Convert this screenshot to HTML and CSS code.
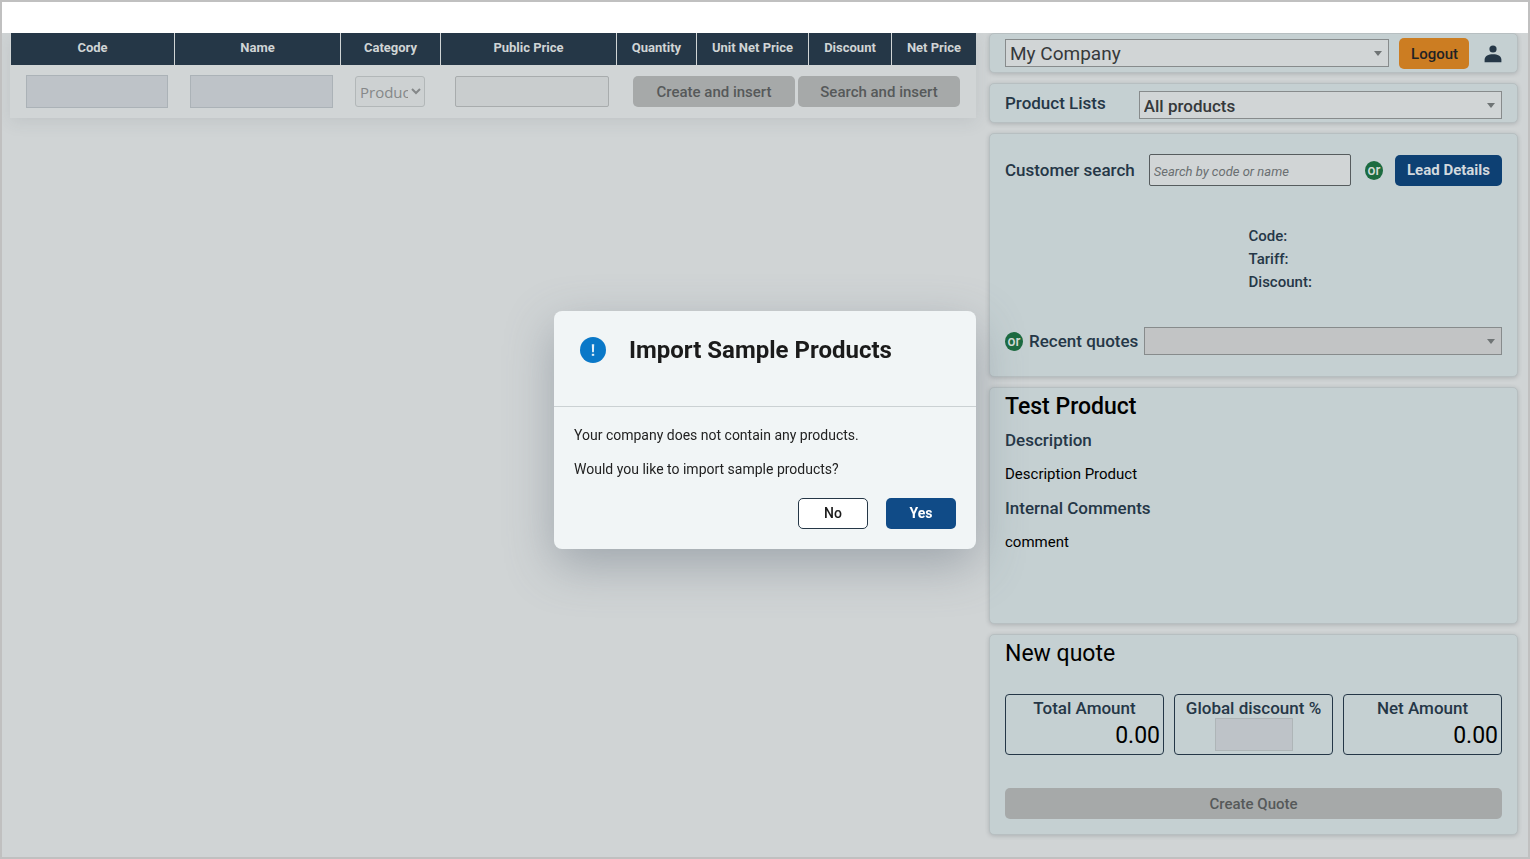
FILE: index.html
```html
<!DOCTYPE html>
<html lang="en">
<head>
<meta charset="utf-8">
<title>New quote</title>
<link rel="stylesheet" href="styles.css">
</head>
<body>
<div class="frame">
  <div class="topbar"></div>
  <div class="workspace">
    <main class="lines">
      <table class="lines-table">
        <colgroup>
          <col class="col-code"><col class="col-name"><col class="col-category"><col class="col-price">
          <col class="col-quantity"><col class="col-unit"><col class="col-discount"><col class="col-net">
        </colgroup>
        <thead>
          <tr><th>Code</th><th>Name</th><th>Category</th><th>Public Price</th><th>Quantity</th><th>Unit Net Price</th><th>Discount</th><th>Net Price</th></tr>
        </thead>
        <tbody>
          <tr>
            <td><input class="cell-input shaded" type="text" aria-label="Code" disabled></td>
            <td><input class="cell-input shaded" type="text" aria-label="Name" disabled></td>
            <td><select class="category" aria-label="Category" disabled><option>Product</option></select></td>
            <td><input class="cell-input price" type="text" aria-label="Public Price" disabled></td>
            <td colspan="4">
              <div class="row-actions">
                <button class="btn btn-disabled" type="button" disabled>Create and insert</button>
                <button class="btn btn-disabled" type="button" disabled>Search and insert</button>
              </div>
            </td>
          </tr>
        </tbody>
      </table>
    </main>

    <aside class="sidebar">
      <section class="card company">
        <div class="picker picker-large"><select aria-label="Company"><option>My Company</option></select></div>
        <button class="btn btn-logout" type="button">Logout</button>
        <button class="user" type="button" aria-label="User profile">
          <svg viewBox="0 0 18 18" width="18" height="18"><circle cx="9" cy="4" r="3.6"/><path d="M.6 17.2v-2.4C.6 10.900 4.600 9.200 9 9.200s8.400 1.700 8.400 5.600v2.400z"/></svg>
        </button>
      </section>

      <section class="card product-lists">
        <label class="label" for="lists">Product Lists</label>
        <div class="picker picker-medium"><select id="lists"><option>All products</option></select></div>
      </section>

      <section class="card customer">
        <div class="customer-search">
          <label class="label" for="search">Customer search</label>
          <input class="search" id="search" type="text" placeholder="Search by code or name">
          <span class="or">or</span>
          <button class="btn btn-primary btn-lead" type="button">Lead Details</button>
        </div>
        <div class="customer-info">
          <div>Code:</div>
          <div>Tariff:</div>
          <div>Discount:</div>
        </div>
        <div class="recent">
          <span class="or">or</span>
          <label class="label" for="recent">Recent quotes</label>
          <div class="picker picker-off"><select id="recent" disabled><option></option></select></div>
        </div>
      </section>

      <section class="card product">
        <h2 class="title title-medium">Test Product</h2>
        <h3 class="label">Description</h3>
        <p class="text">Description Product</p>
        <h3 class="label">Internal Comments</h3>
        <p class="text">comment</p>
      </section>

      <section class="card quote">
        <h2 class="title">New quote</h2>
        <div class="totals">
          <div class="total"><span class="label">Total Amount</span><output class="amount">0.00</output></div>
          <div class="total"><label class="label" for="global">Global discount %</label><input class="discount" id="global" type="text" disabled></div>
          <div class="total"><span class="label">Net Amount</span><output class="amount">0.00</output></div>
        </div>
        <button class="btn btn-disabled btn-create" type="button" disabled>Create Quote</button>
      </section>
    </aside>
  </div>
</div>

<div class="overlay">
  <div class="modal" role="dialog" aria-modal="true" aria-labelledby="modal-title">
    <header class="modal-head">
      <svg class="modal-icon" viewBox="0 0 26 26" width="26" height="26"><circle cx="13" cy="13" r="13" fill="#0a78c8"/><path d="M11.800 7.200h2.400l-.3 8h-1.800z" fill="#e4f0f8"/><rect x="11.800" y="16.800" width="2.400" height="2" fill="#e4f0f8"/></svg>
      <h1 class="modal-title" id="modal-title">Import Sample Products</h1>
    </header>
    <div class="modal-body">
      <p>Your company does not contain any products.</p>
      <p>Would you like to import sample products?</p>
      <div class="modal-actions">
        <button class="btn btn-plain" type="button">No</button>
        <button class="btn btn-yes" type="button">Yes</button>
      </div>
    </div>
  </div>
</div>
</body>
</html>
```
FILE: styles.css
```css
*, *::before, *::after { box-sizing: border-box; }

body {
  margin: 0;
  font-family: Roboto, "Liberation Sans", sans-serif;
  font-size: 15px;
  color: #253747;
}

h1, h2, h3, p { margin: 0; }

input, select, button { font-family: inherit; margin: 0; }

.frame {
  min-height: 100vh;
  border: 2px solid #c0c0c0;
  background: #d0d4d5;
}

.topbar { height: 31px; background: #fff; }

.workspace {
  display: grid;
  grid-template-columns: minmax(0, 966fr) minmax(0, 529fr);
  gap: 13px;
  align-items: start;
  padding: 0 10px 10px 8px;
  overflow: hidden;
}

/* Quote lines */
.lines {
  padding-left: 1px;
  background: #d1d5d6;
  box-shadow: 0 4px 16px rgba(60, 70, 75, 0.1);
}

.lines-table { width: 100%; table-layout: fixed; border-collapse: separate; border-spacing: 0; }

.col-code { width: 164px; }
.col-name { width: 166px; }
.col-category { width: 100px; }
.col-price { width: 176px; }
.col-quantity { width: 80px; }
.col-unit { width: 112px; }
.col-discount { width: 83px; }
.col-net { width: 84px; }

.lines-table th {
  height: 32px;
  padding: 0 0 4px;
  background: #253747;
  color: #d0d4d5;
  border-right: 1px solid #d0d4d5;
  font-size: 13px;
  font-weight: 700;
  white-space: nowrap;
}

.lines-table th:last-child { border-right: 0; }

.lines-table td { height: 53px; padding: 0 7px 0 15px; vertical-align: middle; }

.lines-table td:nth-child(2), .lines-table td:nth-child(4) { padding-right: 8px; }
.lines-table td:nth-child(3), .lines-table td:nth-child(4) { padding-left: 14px; }
.lines-table td:nth-child(5) { padding-left: 16px; }

.cell-input {
  display: block;
  width: 100%;
  height: 33px;
  border: 1px solid #abb2b7;
  background: #c9cdce;
}

.shaded { background: #bec3c8; }

.price { height: 31px; border-color: #a8acad; border-radius: 2px; }

.category {
  display: block;
  width: 70px;
  height: 31px;
  padding: 0;
  border: 1px solid #b2b7b8;
  border-radius: 3px;
  background: #cdd1d2;
  color: #858889;
  font-family: "Open Sans", "Noto Sans", sans-serif;
  font-size: 15px;
  opacity: 1;
}

.row-actions { display: flex; gap: 3px; padding-right: 9px; }
.row-actions .btn { flex: 1; }

/* Buttons */
.btn {
  height: 31px;
  padding: 0 12px;
  border: 0;
  border-radius: 5px;
  font-size: 15px;
  font-weight: 500;
  white-space: nowrap;
}

.btn-disabled { background: #a6a9a9; color: #56595a; }
.btn-logout { padding: 1px 11px 0 12px; background: #cc7d22; color: #1f2325; }
.btn-primary { background: #0d4073; color: #d3d9de; font-weight: 700; }

/* Sidebar */
.sidebar { display: flex; flex-direction: column; gap: 10px; }

.card {
  padding: 0 15px;
  border: 1px solid #b7bfc1;
  border-radius: 5px;
  background: #c5d0d2;
  box-shadow: 0 1px 4px rgba(50, 60, 65, 0.22);
}

.label { font-size: 17px; line-height: 20px; font-weight: 500; color: #253747; white-space: nowrap; }

.picker { position: relative; flex: 1; min-width: 0; }

.picker::after {
  content: "";
  position: absolute;
  top: 12px;
  right: 7px;
  border: 4px solid transparent;
  border-top: 5px solid #6f7475;
  border-bottom: 0;
  pointer-events: none;
}

.picker select {
  display: block;
  width: 100%;
  height: 28px;
  padding: 0 4px;
  appearance: none;
  border: 1px solid #878b8c;
  border-radius: 0;
  background: #d1d5d6;
  color: #36393b;
  font-size: 17px;
  opacity: 1;
}

.picker-large select { font-size: 19px; }
.picker-medium select { padding-top: 2px; font-weight: 500; }
.picker-off select { background: #c2c4c5; }

.company { display: flex; align-items: center; gap: 10px; height: 40px; }

.user { margin: 0 0 0 5px; padding: 1px 0 0; border: 0; background: none; line-height: 0; fill: #253747; }

.product-lists { display: flex; gap: 33px; height: 40px; padding-top: 7px; }
.product-lists .label { padding-top: 2px; }

.customer { height: 244px; padding-top: 20px; }
.customer-search { display: flex; align-items: center; }

.search {
  flex: 1;
  min-width: 0;
  height: 32px;
  margin: 0 14px;
  padding: 2px 4px 0;
  border: 1px solid #565c5e;
  border-radius: 2px;
  background: #d1d5d6;
  font-size: 13px;
}

.search::placeholder { color: #6a6f71; font-style: italic; opacity: 1; }

.or {
  flex: none;
  width: 18px;
  height: 19px;
  border-radius: 50%;
  background: #1c6b40;
  color: #d3dad6;
  font-size: 14px;
  line-height: 18px;
  font-weight: 500;
  text-align: center;
}

.btn-lead { margin-left: 12px; }

.customer-info { margin: 39px 0 0 49%; font-weight: 500; line-height: 23px; }

.recent { display: flex; align-items: center; gap: 6px; margin-top: 33px; }

.product { height: 237px; }

.title { font-size: 23px; line-height: 38px; font-weight: 400; color: #000; }
.title-medium { margin-bottom: -3px; font-weight: 500; }
.product .label, .product .text { line-height: 34px; }
.text { color: #000; }

.quote { height: 201px; }

.totals { display: grid; grid-template-columns: repeat(3, minmax(0, 1fr)); gap: 10px; margin-top: 21px; }

.total {
  display: flex;
  flex-direction: column;
  align-items: center;
  height: 61px;
  padding: 3px;
  border: 1px solid #253747;
  border-radius: 4px;
}

.amount { align-self: flex-end; font-size: 23px; line-height: 36px; color: #000; }

.discount { width: 78px; height: 33px; border: 1px solid #aeb5b7; background: #bec3c8; }

.btn-create { display: block; width: 100%; margin-top: 33px; }

/* Dialog */
.overlay { position: fixed; inset: 0; display: flex; align-items: center; justify-content: center; }

.modal {
  width: 422px;
  border-radius: 8px;
  background: #f1f5f6;
  color: #222;
  box-shadow: 0 16px 48px rgba(100, 110, 125, 0.45);
}

.modal-head {
  display: flex;
  align-items: flex-start;
  gap: 23px;
  height: 96px;
  padding: 26px;
  border-bottom: 1px solid #cbd1d3;
}

.modal-title { font-size: 24px; line-height: 26px; font-weight: 700; color: #1b1b1b; white-space: nowrap; }

.modal-body { padding: 11px 20px 20px; font-size: 14px; line-height: 34px; }

.modal-actions { display: flex; justify-content: flex-end; gap: 18px; margin-top: 12px; }

.modal-actions .btn { width: 70px; font-size: 14px; }

.btn-plain { border: 1px solid #253747; background: #fff; color: #1b1b1b; }
.modal-actions .btn-yes { background: #104b87; color: #fff; font-weight: 700; }
```
